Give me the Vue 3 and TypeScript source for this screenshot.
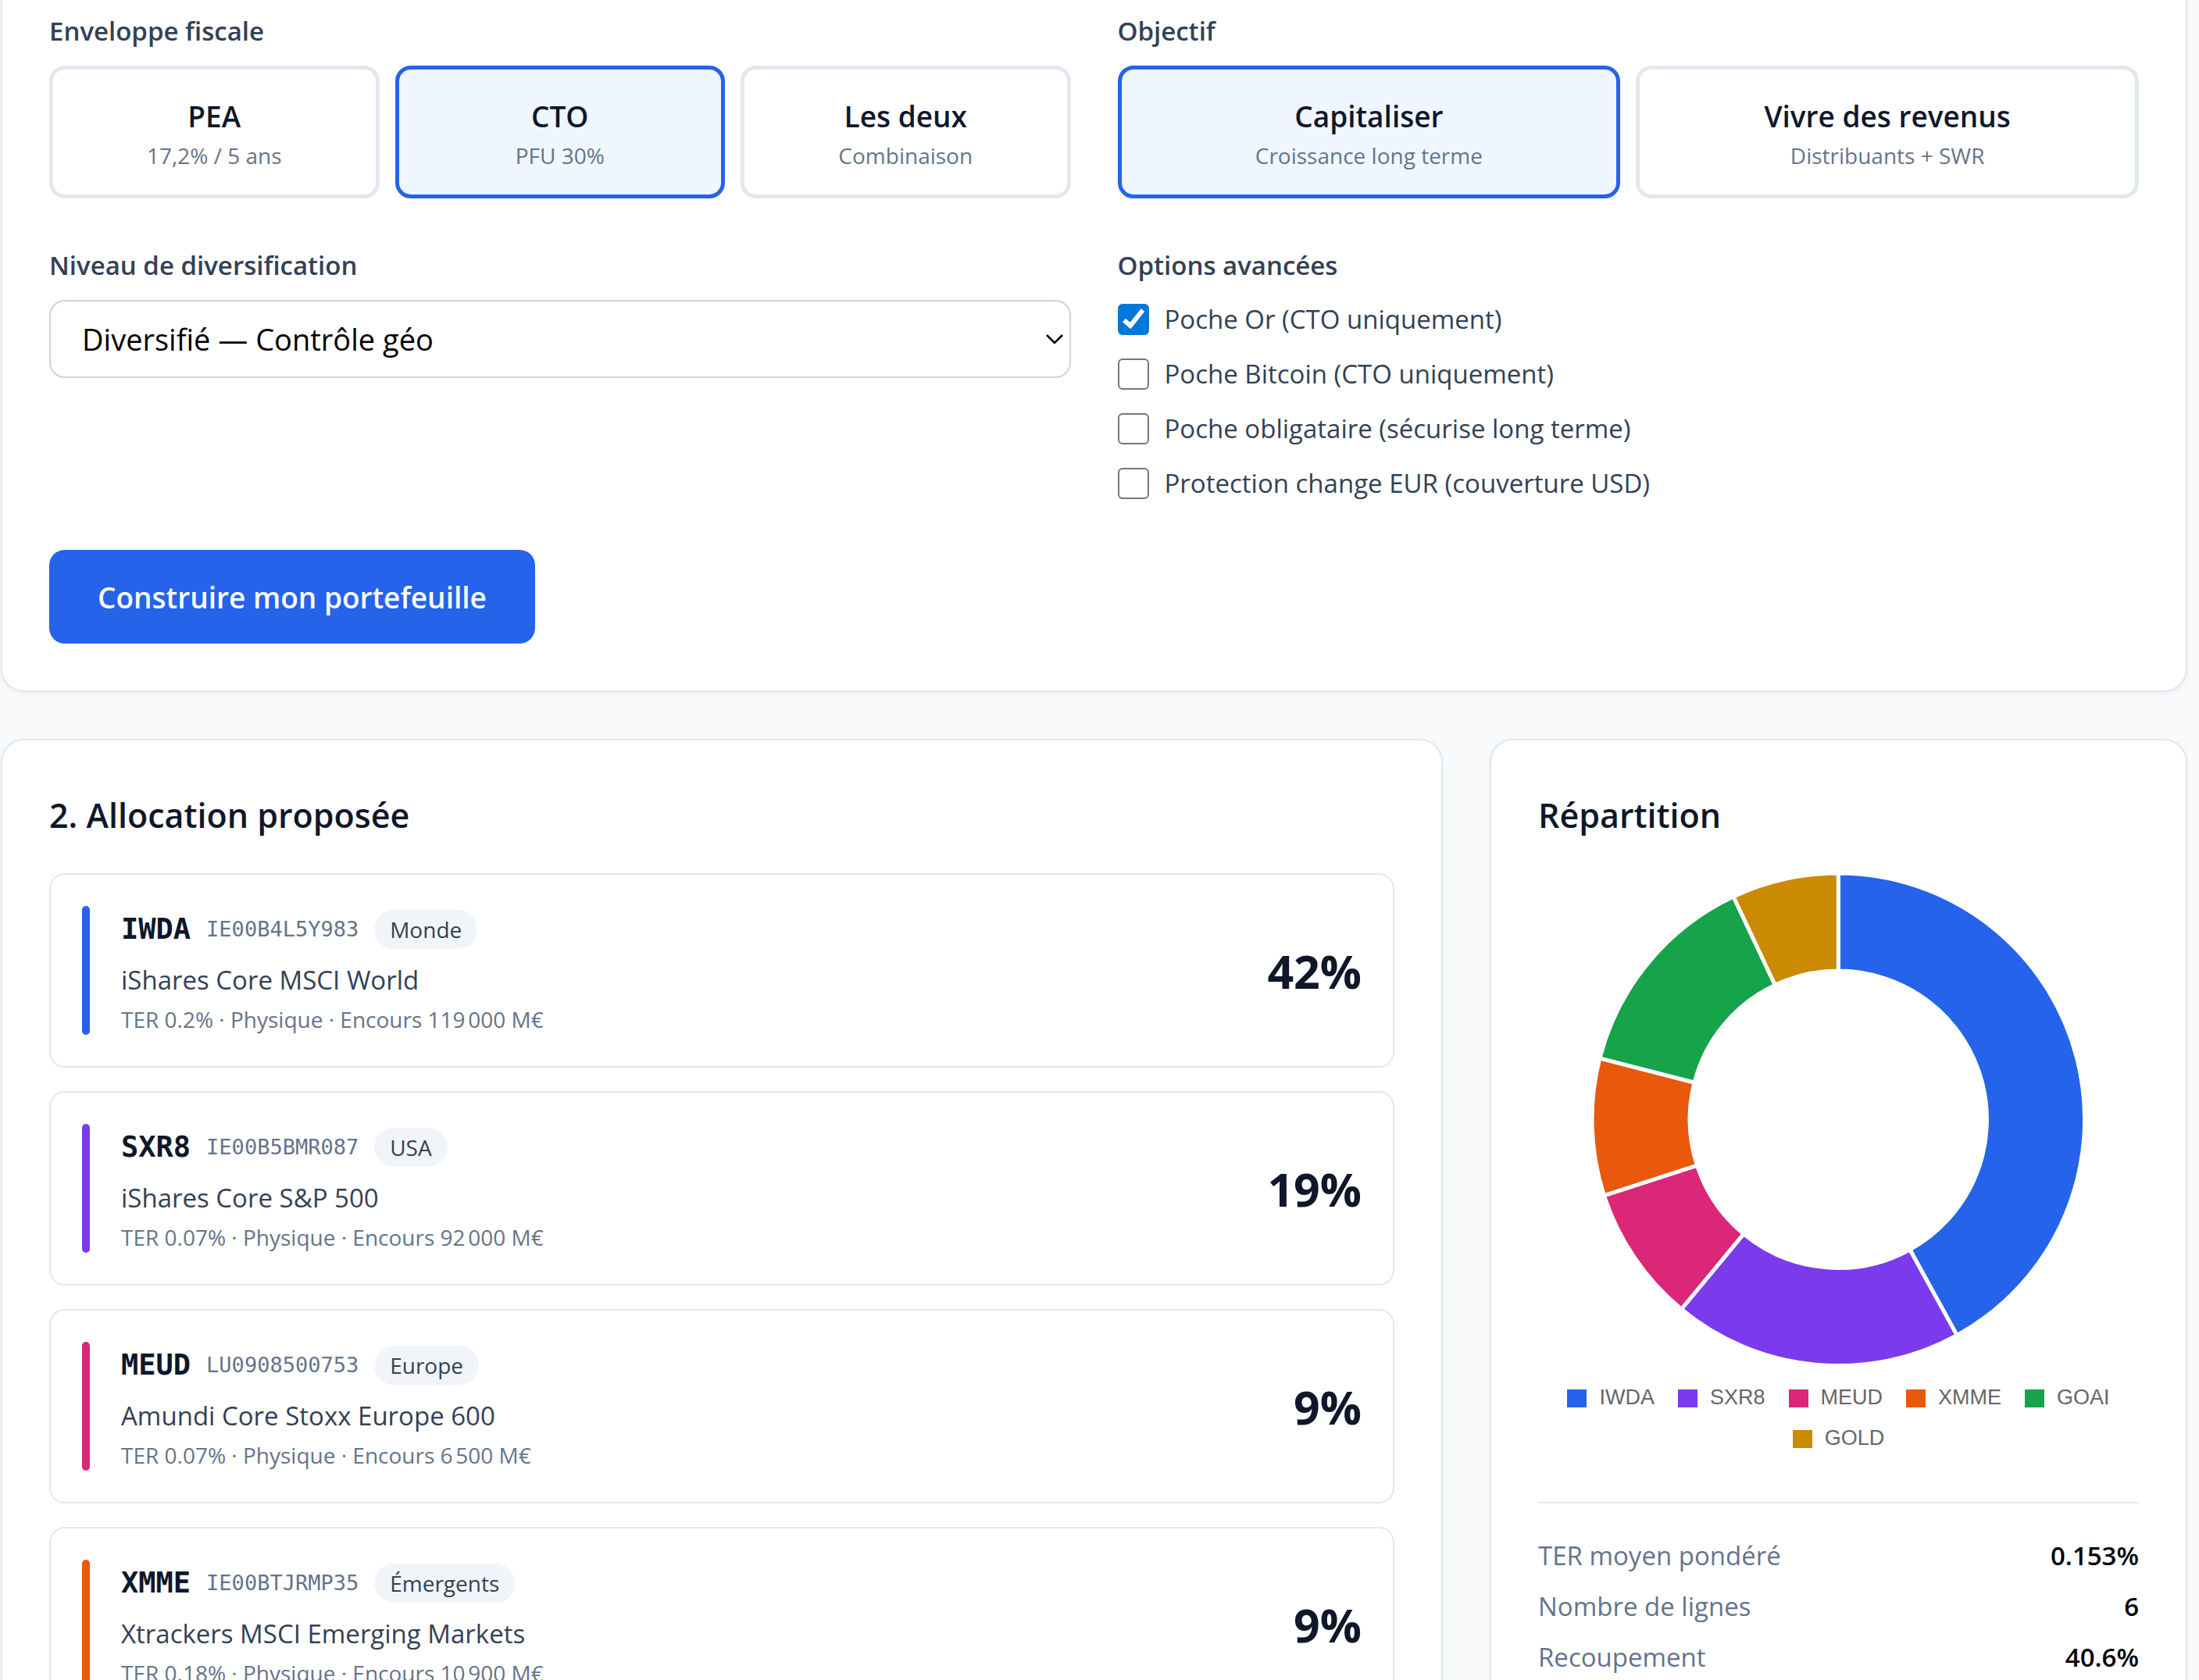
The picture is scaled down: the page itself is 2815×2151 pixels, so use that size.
<script setup lang="ts">
import { computed, ref } from 'vue'

interface Choice {
  id: string
  title: string
  hint: string
}

interface AdvancedOption {
  id: string
  label: string
  checked: boolean
}

interface Holding {
  ticker: string
  isin: string
  zone: string
  name: string
  details: string
  weight: number
  color: string
}

interface Slice {
  label: string
  weight: number
  color: string
}

const envelopes: Choice[] = [
  { id: 'pea', title: 'PEA', hint: '17,2% / 5 ans' },
  { id: 'cto', title: 'CTO', hint: 'PFU 30%' },
  { id: 'both', title: 'Les deux', hint: 'Combinaison' },
]
const goals: Choice[] = [
  { id: 'growth', title: 'Capitaliser', hint: 'Croissance long terme' },
  { id: 'income', title: 'Vivre des revenus', hint: 'Distribuants + SWR' },
]
const envelope = ref('cto')
const goal = ref('growth')
const level = ref('geo')

const options = ref<AdvancedOption[]>([
  { id: 'gold', label: 'Poche Or (CTO uniquement)', checked: true },
  { id: 'bitcoin', label: 'Poche Bitcoin (CTO uniquement)', checked: false },
  { id: 'bonds', label: 'Poche obligataire (sécurise long terme)', checked: false },
  { id: 'hedge', label: 'Protection change EUR (couverture USD)', checked: false },
])

const holdings: Holding[] = [
  { ticker: 'IWDA', isin: 'IE00B4L5Y983', zone: 'Monde', name: 'iShares Core MSCI World', details: 'TER 0.2% · Physique · Encours 119\u202f000 M€', weight: 42, color: '#2563eb' },
  { ticker: 'SXR8', isin: 'IE00B5BMR087', zone: 'USA', name: 'iShares Core S&P 500', details: 'TER 0.07% · Physique · Encours 92\u202f000 M€', weight: 19, color: '#7c3aed' },
  { ticker: 'MEUD', isin: 'LU0908500753', zone: 'Europe', name: 'Amundi Core Stoxx Europe 600', details: 'TER 0.07% · Physique · Encours 6\u202f500 M€', weight: 9, color: '#db2777' },
  { ticker: 'XMME', isin: 'IE00BTJRMP35', zone: 'Émergents', name: 'Xtrackers MSCI Emerging Markets', details: 'TER 0.18% · Physique · Encours 10\u202f900 M€', weight: 9, color: '#ea580c' },
]

const slices: Slice[] = [
  { label: 'IWDA', weight: 42, color: '#2563eb' },
  { label: 'SXR8', weight: 19, color: '#7c3aed' },
  { label: 'MEUD', weight: 9, color: '#db2777' },
  { label: 'XMME', weight: 9, color: '#ea580c' },
  { label: 'GOAI', weight: 14, color: '#16a34a' },
  { label: 'GOLD', weight: 7, color: '#ca8a04' },
]

const stats = [
  { label: 'TER moyen pondéré', value: '0.153%' },
  { label: 'Nombre de lignes', value: '6' },
  { label: 'Recoupement', value: '40.6%' },
]

const OUTER = 315
const INNER = 190

function point(radius: number, share: number): string {
  const angle = share * 2 * Math.PI - Math.PI / 2
  return `${(radius * Math.cos(angle)).toFixed(2)} ${(radius * Math.sin(angle)).toFixed(2)}`
}

// Ring segments, clockwise from twelve o'clock.
const arcs = computed(() => {
  let from = 0
  return slices.map((slice) => {
    const start = from
    const end = from + slice.weight / 100
    from = end
    const large = end - start > 0.5 ? 1 : 0
    const d =
      `M ${point(OUTER, start)} A ${OUTER} ${OUTER} 0 ${large} 1 ${point(OUTER, end)} ` +
      `L ${point(INNER, end)} A ${INNER} ${INNER} 0 ${large} 0 ${point(INNER, start)} Z`
    return { label: slice.label, color: slice.color, d }
  })
})
</script>

<template>
  <main class="page">
    <form class="card form" @submit.prevent>
      <div class="fields">
        <section class="field" aria-labelledby="envelope-label">
          <h3 id="envelope-label" class="label">Enveloppe fiscale</h3>
          <div class="choices">
            <button
              v-for="item in envelopes"
              :key="item.id"
              type="button"
              class="choice"
              :class="{ selected: envelope === item.id }"
              :aria-pressed="envelope === item.id"
              @click="envelope = item.id"
            >
              <span class="choice-title">{{ item.title }}</span>
              <span class="choice-hint">{{ item.hint }}</span>
            </button>
          </div>
        </section>

        <section class="field" aria-labelledby="goal-label">
          <h3 id="goal-label" class="label">Objectif</h3>
          <div class="choices">
            <button
              v-for="item in goals"
              :key="item.id"
              type="button"
              class="choice"
              :class="{ selected: goal === item.id }"
              :aria-pressed="goal === item.id"
              @click="goal = item.id"
            >
              <span class="choice-title">{{ item.title }}</span>
              <span class="choice-hint">{{ item.hint }}</span>
            </button>
          </div>
        </section>

        <div class="field">
          <label class="label" for="level">Niveau de diversification</label>
          <select id="level" v-model="level" class="select">
            <option value="geo">Diversifié — Contrôle géo</option>
          </select>
        </div>

        <section class="field" aria-labelledby="options-label">
          <h3 id="options-label" class="label">Options avancées</h3>
          <div class="options">
            <label v-for="option in options" :key="option.id" class="option" :for="option.id">
              <input :id="option.id" v-model="option.checked" type="checkbox" class="checkbox" />
              <span>{{ option.label }}</span>
            </label>
          </div>
        </section>
      </div>

      <button type="submit" class="submit">Construire mon portefeuille</button>
    </form>

    <div class="results">
      <section class="card panel allocation">
        <h2 class="heading">2. Allocation proposée</h2>
        <ul class="holdings">
          <li v-for="holding in holdings" :key="holding.ticker" class="holding">
            <span class="stripe" :style="{ backgroundColor: holding.color }"></span>
            <div class="holding-body">
              <div class="holding-head">
                <span class="ticker">{{ holding.ticker }}</span>
                <span class="isin">{{ holding.isin }}</span>
                <span class="zone">{{ holding.zone }}</span>
              </div>
              <p class="holding-name">{{ holding.name }}</p>
              <p class="holding-details">{{ holding.details }}</p>
            </div>
            <span class="weight">{{ holding.weight }}%</span>
          </li>
        </ul>
      </section>

      <section class="card panel">
        <h2 class="heading">Répartition</h2>
        <svg class="donut" viewBox="-315 -315 630 630" role="img" aria-labelledby="legend">
          <path
            v-for="arc in arcs"
            :key="arc.label"
            :d="arc.d"
            :fill="arc.color"
            stroke="#ffffff"
            stroke-width="5"
            stroke-linejoin="bevel"
          />
        </svg>
        <ul id="legend" class="legend">
          <li v-for="slice in slices" :key="slice.label" class="legend-item">
            <span class="swatch" :style="{ backgroundColor: slice.color }"></span>
            <span>{{ slice.label }}</span>
          </li>
        </ul>
        <dl class="stats">
          <div v-for="stat in stats" :key="stat.label" class="stat">
            <dt>{{ stat.label }}</dt>
            <dd>{{ stat.value }}</dd>
          </div>
        </dl>
      </section>
    </div>
  </main>
</template>

<style>
body {
  margin: 0;
  background: #f8fafc;
}
</style>

<style scoped>
* {
  box-sizing: border-box;
  margin: 0;
  padding: 0;
}

.page {
  display: flex;
  flex-direction: column;
  gap: 60px;
  height: 100vh;
  padding: 0 15px 0 1px;
  overflow: hidden;
  background: #f8fafc;
  color: #000000;
  font-family: 'Segoe UI', 'Open Sans', 'Noto Sans', sans-serif;
  font-size: 33px;
  line-height: 50px;
}

.card {
  border: 2px solid #e2e8f0;
  border-radius: 30px;
  background: #ffffff;
  box-shadow: 0 2px 6px rgba(15, 23, 42, 0.06);
}

.form {
  flex: none;
  padding: 14px 60px 60px;
  border-top: 0;
  border-top-left-radius: 0;
  border-top-right-radius: 0;
}

.fields {
  display: grid;
  grid-template-columns: repeat(2, minmax(0, 1fr));
  gap: 60px;
  margin-bottom: 60px;
}

.field {
  display: flex;
  flex-direction: column;
  gap: 18px;
}

.label {
  color: #334155;
  font-size: 33px;
  font-weight: 600;
  line-height: 52px;
}

.choices {
  display: flex;
  gap: 20px;
}

.choice {
  display: flex;
  flex: 1 1 0;
  flex-direction: column;
  align-items: center;
  padding: 30px;
  border: 5px solid #e2e8f0;
  border-radius: 20px;
  background: #ffffff;
  font-family: inherit;
  cursor: pointer;
}

.choice.selected {
  border-color: #2563eb;
  background: #eff6ff;
}

.choice-title {
  color: #0f172a;
  font-size: 37px;
  font-weight: 600;
  line-height: 60px;
}

.choice-hint {
  color: #64748b;
  font-size: 28px;
  line-height: 40px;
}

.select {
  width: 100%;
  height: 100px;
  padding: 0 40px;
  border: 2px solid #cbd5e1;
  border-radius: 20px;
  appearance: none;
  background: #ffffff url("data:image/svg+xml,%3Csvg xmlns='http://www.w3.org/2000/svg' viewBox='0 0 22 12'%3E%3Cpath d='M1 1l10 10L21 1' fill='none' stroke='%23000' stroke-width='2.5'/%3E%3C/svg%3E") no-repeat right 8px center / 22px 12px;
  color: #000000;
  font-family: inherit;
  font-size: 38px;
}

.options {
  display: flex;
  flex-direction: column;
  gap: 20px;
}

.option {
  display: flex;
  align-items: center;
  gap: 20px;
  color: #334155;
}

.checkbox {
  flex: none;
  width: 40px;
  height: 40px;
  border: 2px solid #767676;
  border-radius: 6px;
  appearance: none;
  background: #ffffff;
}

.checkbox:checked {
  border-color: #0078d7;
  background: #0078d7 url("data:image/svg+xml,%3Csvg xmlns='http://www.w3.org/2000/svg' viewBox='0 0 40 40'%3E%3Cpath d='M8 21l8 7L32 8' fill='none' stroke='%23fff' stroke-width='6'/%3E%3C/svg%3E") no-repeat center / 40px 40px;
}

.submit {
  height: 120px;
  padding: 0 62px;
  border: 0;
  border-radius: 20px;
  background: #2563eb;
  color: #ffffff;
  font-family: inherit;
  font-size: 37px;
  font-weight: 600;
  cursor: pointer;
}

.results {
  display: grid;
  flex: none;
  grid-template-columns: repeat(3, minmax(0, 1fr));
  gap: 60px;
}

.allocation {
  grid-column: span 2;
}

.panel {
  padding: 60px;
}

.heading {
  margin-bottom: 38px;
  color: #0f172a;
  font-size: 43px;
  font-weight: 600;
  line-height: 72px;
}

.holdings {
  display: flex;
  flex-direction: column;
  gap: 30px;
  list-style: none;
}

.holding {
  display: flex;
  align-items: center;
  gap: 40px;
  padding: 40px;
  border: 2px solid #e2e8f0;
  border-radius: 20px;
}

.stripe {
  align-self: stretch;
  width: 10px;
  border-radius: 5px;
}

.holding-body {
  flex: 1;
}

.holding-head {
  display: flex;
  align-items: center;
  gap: 20px;
  height: 60px;
  margin-bottom: 10px;
}

.ticker,
.isin {
  font-family: Consolas, 'DejaVu Sans Mono', monospace;
}

.ticker {
  color: #0f172a;
  font-size: 37px;
  font-weight: 700;
}

.isin {
  color: #64748b;
  font-size: 27px;
}

.zone {
  padding: 0 20px;
  border-radius: 25px;
  background: #f1f5f9;
  color: #334155;
  font-size: 28px;
}

.holding-name {
  margin-bottom: 5px;
  color: #334155;
}

.holding-details {
  color: #64748b;
  font-size: 28px;
  line-height: 40px;
}

.weight {
  color: #0f172a;
  font-size: 59px;
  font-weight: 700;
}

.donut {
  display: block;
  width: 82%;
  margin: 4px auto 0;
}

.legend {
  display: flex;
  flex-wrap: wrap;
  justify-content: center;
  gap: 20px 30px;
  margin: 24px 0 66px;
  padding: 0 30px;
  color: #666666;
  font-family: 'Liberation Sans', Arial, sans-serif;
  font-size: 27px;
  line-height: 32px;
  list-style: none;
}

.legend-item {
  display: flex;
  align-items: center;
  gap: 16px;
}

.swatch {
  width: 25px;
  height: 23px;
  margin-top: 4px;
}

.stats {
  display: flex;
  flex-direction: column;
  gap: 15px;
  padding-top: 42px;
  border-top: 2px solid #e2e8f0;
}

.stat {
  display: flex;
  justify-content: space-between;
}

.stat dt {
  color: #64748b;
}

.stat dd {
  font-weight: 600;
}
</style>
